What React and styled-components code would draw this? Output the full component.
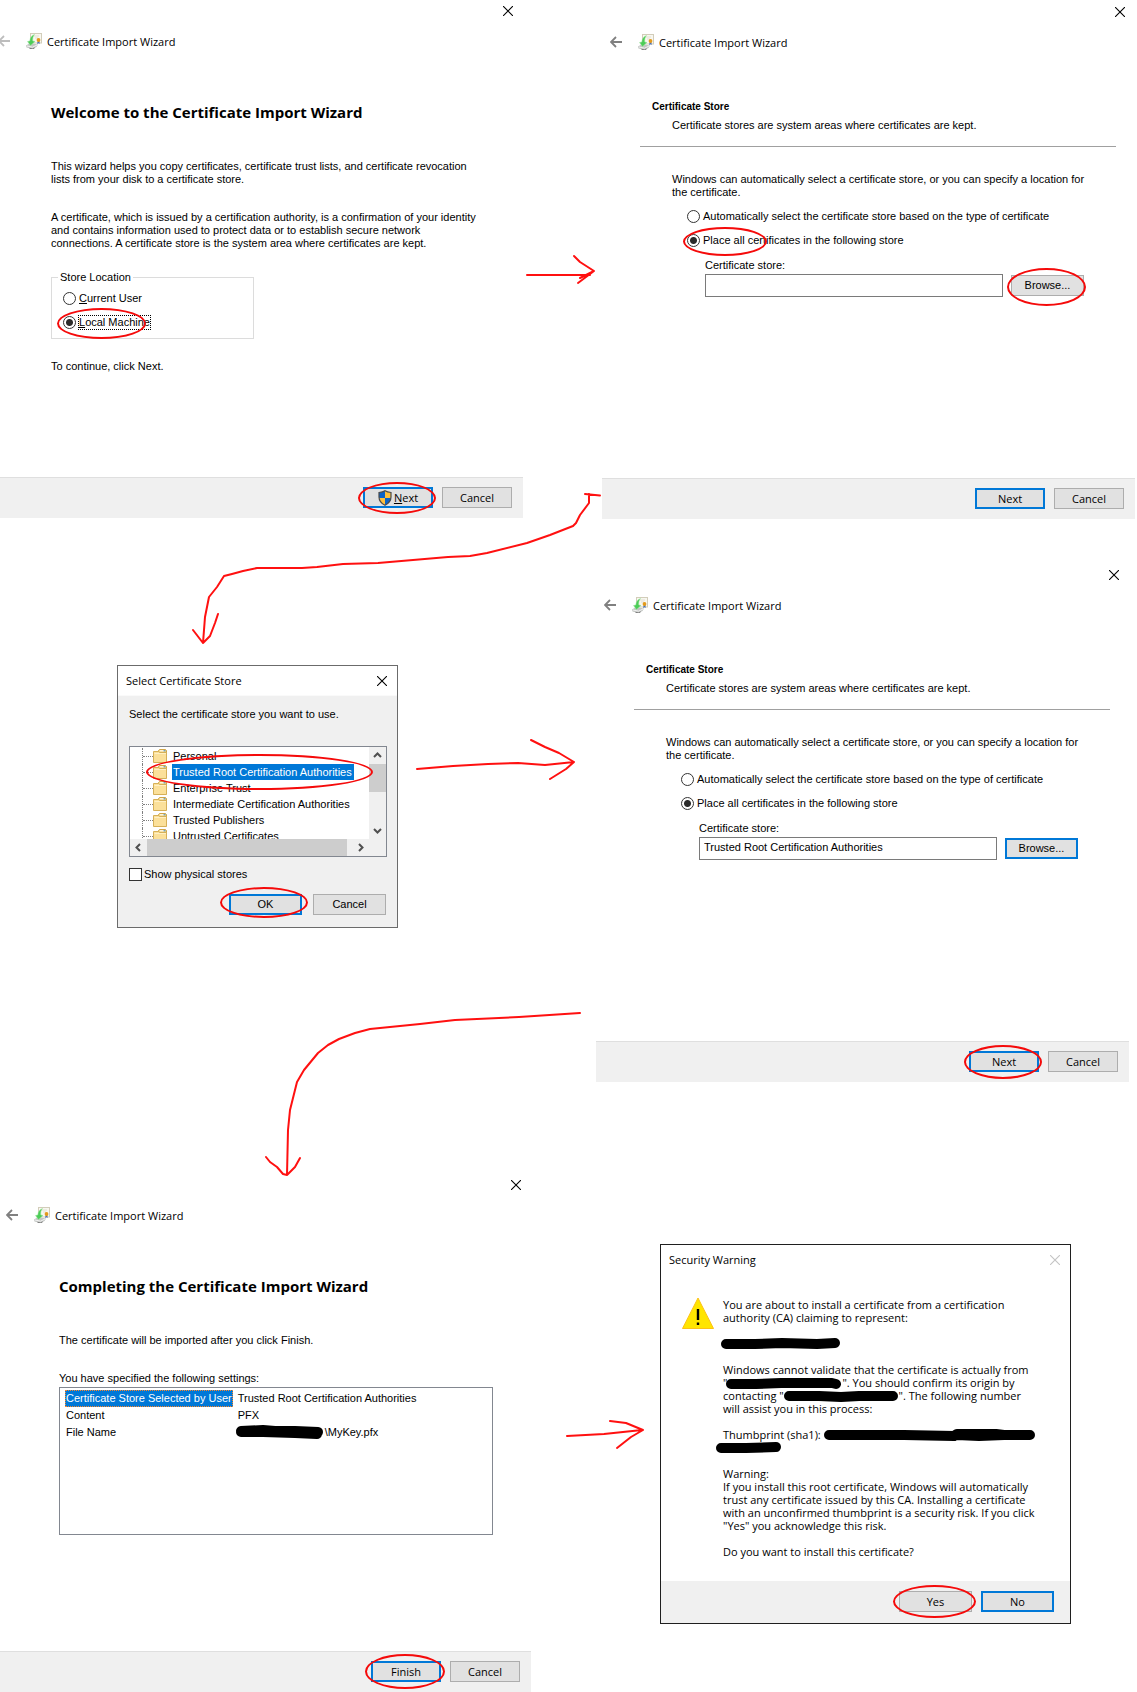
import React from "react";
import styled, { createGlobalStyle, css } from "styled-components";

const uiFont = `"Open Sans", "Noto Sans", sans-serif`;
const dialogFont = `"Liberation Sans", Arial, sans-serif`;
const accent = "#0078d7";

const GlobalStyle = createGlobalStyle`
  *, *::before, *::after { box-sizing: border-box; }
  body {
    margin: 0;
    background: #fff;
    color: #000;
    font: 11px/13px ${dialogFont};
    overflow-x: hidden;
  }
  h1, h2, p, ul { margin: 0; padding: 0; }
`;

/* ---------- page ---------- */

const Board = styled.main`
  position: relative;
  display: flex;
  gap: 65px;
`;

const Column = styled.div`
  flex: none;
  width: ${(p) => p.$width};
  display: flex;
  flex-direction: column;
  align-items: flex-start;
`;

const Step = styled.div`
  width: 100%;
  margin-top: ${(p) => p.$gap || 0}px;
  padding-left: ${(p) => p.$indent || 0}px;
`;

const Connectors = styled.svg`
  position: absolute;
  top: 0;
  left: 0;
  pointer-events: none;
  fill: none;
  stroke: #ff1010;
  stroke-width: 2;
  stroke-linecap: round;
  stroke-linejoin: round;
`;

/* ---------- shared controls ---------- */

const Marked = styled.span`
  position: relative;
  display: inline-flex;
`;

const Ring = styled.span`
  position: absolute;
  left: ${(p) => p.$x}px;
  top: ${(p) => p.$y}px;
  width: ${(p) => p.$w}px;
  height: ${(p) => p.$h}px;
  border: 2px solid #f50a0a;
  border-radius: 50%;
  pointer-events: none;
  z-index: 1;
`;

const Button = styled.button`
  display: inline-flex;
  align-items: center;
  justify-content: center;
  gap: ${(p) => p.$gap || 0}px;
  width: ${(p) => (p.$wide ? 73 : 70)}px;
  height: 21px;
  padding: 0;
  border: ${(p) => (p.$primary ? `2px solid ${accent}` : "1px solid #adadad")};
  background: #e1e1e1;
  color: #000;
  font: 11px/13px ${(p) => (p.$dialog ? dialogFont : uiFont)};
`;

const IconButton = styled.button`
  display: flex;
  align-items: center;
  justify-content: center;
  width: ${(p) => p.$width || 30}px;
  height: ${(p) => p.$height || 22}px;
  padding: 0;
  border: 0;
  background: none;
  color: ${(p) => p.$color || "#000"};
`;

const Choice = styled.label`
  position: relative;
  display: flex;
  align-items: center;
  gap: ${(p) => p.$gap || 3}px;
  width: max-content;
  height: 15px;
`;

const ChoiceText = styled.span`
  ${(p) => p.$focused && css`outline: 1px dotted #000;`}
`;

const Radio = styled.input.attrs({ type: "radio" })`
  appearance: none;
  width: 13px;
  height: 13px;
  margin: 0;
  border: 1px solid #333;
  border-radius: 50%;
  background: #fff;
  &:checked {
    background: radial-gradient(circle, #2b2b2b 3px, #fff 4px);
  }
`;

const Checkbox = styled.input.attrs({ type: "checkbox" })`
  appearance: none;
  width: 13px;
  height: 13px;
  margin: 0;
  border: 1px solid #333;
  background: #fff;
`;

/* ---------- wizard window ---------- */

const Window = styled.section`
  display: flex;
  flex-direction: column;
  width: 533px;
  min-height: 518px;
  margin-left: ${(p) => -(p.$cropped || 0)}px;
  background: #fff;
`;

const CaptionRow = styled.div`
  display: flex;
  justify-content: flex-end;
`;

const NavRow = styled.header`
  display: flex;
  align-items: center;
  height: 38px;
  padding-left: 8px;
  gap: 5px;
  font: 11px/15px ${uiFont};
`;

const BackSlot = styled.div`
  width: 23px;
`;

const WizardFooter = styled.footer`
  display: flex;
  justify-content: flex-end;
  gap: 9px;
  height: 41px;
  padding: 9px 11px 0;
  border-top: 1px solid #dfdfdf;
  background: #f0f0f0;
`;

const IntroBody = styled.div`
  flex: 1;
  padding: 42px 38px 20px 61px;
`;

const Heading = styled.h1`
  font: bold 15px/20px ${uiFont};
  margin-bottom: 38px;
`;

const Paragraph = styled.p`
  margin-bottom: ${(p) => p.$after || 0}px;
  white-space: nowrap;
`;

const Group = styled.fieldset`
  width: 203px;
  margin: 0 0 21px;
  padding: 7px 6px 8px;
  border: 1px solid #dcdcdc;
  legend { padding: 0 2px; }
`;

const ChoiceList = styled.div`
  display: flex;
  flex-direction: column;
  gap: 9px;
  padding-left: ${(p) => p.$inset}px;
`;

const StoreBody = styled.div`
  flex: 1;
  padding: 39px 19px 20px 38px;
`;

const StoreHeader = styled.div`
  padding: 0 0 14px 12px;
  border-bottom: 1px solid #a0a0a0;
  h2 {
    font: bold 10px/13px ${dialogFont};
    margin-bottom: 6px;
  }
  p { padding-left: 20px; }
`;

const StoreForm = styled.div`
  padding: 26px 0 0 32px;
`;

const StoreField = styled.div`
  margin-top: 11px;
  padding-left: 33px;
`;

const StoreRow = styled.div`
  display: flex;
  align-items: center;
  gap: 8px;
  margin-top: 2px;
`;

const TextBox = styled.input.attrs({ type: "text" })`
  width: 298px;
  height: 23px;
  padding: 0 4px 4px;
  border: 1px solid #7a7a7a;
  background: #fff;
  color: #000;
  font: 11px/13px ${dialogFont};
`;

const SettingsBox = styled.div`
  height: 148px;
  margin-top: 2px;
  padding: 2px 5px;
  border: 1px solid #828790;
`;

const SettingsTable = styled.table`
  border-collapse: collapse;
  th, td {
    height: 17px;
    padding: 0 1px;
    font-weight: normal;
    text-align: left;
    white-space: nowrap;
  }
  th { width: 166px; }
  td { padding-left: 5px; }
`;

const SelectedCell = styled.th`
  background: ${accent};
  color: #fff;
  outline: 1px dotted #ff8728;
  outline-offset: -1px;
`;

/* ---------- framed dialogs ---------- */

const Dialog = styled.section`
  width: ${(p) => p.$width}px;
  border: 1px solid ${(p) => p.$edge};
  background: #fff;
`;

const DialogTitle = styled.header`
  display: flex;
  align-items: center;
  justify-content: space-between;
  height: 29px;
  padding-left: 8px;
  font: 11px/15px ${uiFont};
`;

const PickerBody = styled.div`
  padding: 12px 10px 12px 11px;
  border-top: 1px solid #fafafa;
  background: #f0f0f0;
`;

const TreeFrame = styled.div`
  position: relative;
  display: grid;
  grid-template: 92px 17px / 1fr 17px;
  margin: 25px 0 10px;
  border: 1px solid #828790;
  background: #f0f0f0;
`;

const Tree = styled.ul`
  overflow: hidden;
  padding-top: 1px;
  background: #fff;
  list-style: none;
`;

const TreeItem = styled.li`
  display: flex;
  align-items: center;
  height: 16px;
  padding-left: 12px;
  line-height: 16px;
`;

const Branch = styled.span`
  display: flex;
  align-items: center;
  width: 11px;
  height: 16px;
  border-left: 1px dotted #808080;
  &::after {
    content: "";
    flex: 1;
    border-top: 1px dotted #808080;
  }
`;

const TreeLabel = styled.span`
  margin-left: 4px;
  padding: 0 2px 0 1px;
  ${(p) => p.$selected && css`background: ${accent}; color: #fff;`}
`;

const ScrollBar = styled.div`
  display: flex;
  flex-direction: ${(p) => (p.$vertical ? "column" : "row")};
  background: #f0f0f0;
  color: #505050;
`;

const ScrollButton = styled(IconButton).attrs({ $width: 17, $height: 17, $color: "#505050" })``;

const ScrollTrack = styled.div`
  display: flex;
  flex-direction: ${(p) => (p.$vertical ? "column" : "row")};
  flex: 1;
`;

const ScrollThumb = styled.div`
  flex: ${(p) => p.$size};
  background: #cdcdcd;
`;

const PickerActions = styled.div`
  display: flex;
  justify-content: flex-end;
  gap: 11px;
  margin-top: 12px;
  padding-right: 1px;
`;

const WarningBody = styled.div`
  display: flex;
  align-items: flex-start;
  gap: 9px;
  padding: 23px 20px 23px 21px;
`;

const WarningText = styled.div`
  padding-top: 1px;
  font: 11px/13px ${uiFont};
  white-space: nowrap;
  p + p { margin-top: 13px; }
`;

const WarningActions = styled.footer`
  display: flex;
  justify-content: flex-end;
  gap: 9px;
  padding: 10px 16px 11px;
  background: #f0f0f0;
`;

const Scribble = styled.svg`
  height: 12px;
  margin-left: ${(p) => -(p.$pull || 0)}px;
  vertical-align: -2px;
  overflow: visible;
  fill: none;
  stroke: #000;
  stroke-width: 10;
  stroke-linecap: round;
  stroke-linejoin: round;
`;

/* ---------- drawings ---------- */

const CloseIcon = () => (
  <svg width="10" height="10" viewBox="0 0 10 10" stroke="currentColor" strokeWidth="1.1">
    <path d="M0 0L10 10M10 0L0 10" />
  </svg>
);

const BackIcon = () => (
  <svg width="12" height="12" viewBox="0 0 12 12" fill="none" stroke="currentColor" strokeWidth="1.8">
    <path d="M12 6H1M6 1L1 6L6 11" />
  </svg>
);

const WizardIcon = () => (
  <svg width="16" height="16" viewBox="0 0 16 16">
    <rect x="4.500" y=".5" width="11" height="9.500" fill="#f8f7f0" stroke="#d2cdba" />
    <path d="M8 3h5M9 5h3" stroke="#e2dfd2" />
    <path d="M0 12.500L4 10l8 1.500-1.500 2.500L6.500 16 .5 14.500z" fill="#c3c6c3" />
    <path d="M1 13l5.500 1.200L11 12" stroke="#f2f2f2" fill="none" />
    <path d="M3.500 15.400l3.200.4 2-1" stroke="#7d7d7d" fill="none" />
    <path d="M8.500 1.500C5.500 2.500 4 5 3.800 8L1.500 8.500 4.500 12.500 9 8.500 6.800 8C6.500 5.500 7 3.500 8.500 1.500z" fill="#4ccc58" stroke="#9be59a" strokeWidth=".5" />
    <path d="M11.800 8l-.8 3 1.500-.8 1.200.8-.3-3z" fill="#4a6fb5" />
    <circle cx="12.500" cy="7" r="1.900" fill="#e39a1c" />
  </svg>
);

const ShieldIcon = () => (
  <svg width="14" height="16" viewBox="0 0 14 16">
    <clipPath id="shield"><path d="M7 .8C5.300 2 3.300 2.400 1 2.500V7c0 4 2.500 6.500 6 8.300C10.500 13.500 13 11 13 7V2.500C10.700 2.400 8.700 2 7 .8z" /></clipPath>
    <g clipPath="url(#shield)">
      <path d="M0 0h7v8H0zM7 8h7v8H7z" fill="#0a63c8" />
      <path d="M7 0h7v8H7zM0 8h7v8H0z" fill="#ffc03a" />
    </g>
    <path d="M7 .8C5.300 2 3.300 2.400 1 2.500V7c0 4 2.500 6.500 6 8.300C10.500 13.500 13 11 13 7V2.500C10.700 2.400 8.700 2 7 .8z" fill="none" stroke="#4a4a4a" strokeWidth="1.200" />
  </svg>
);

const FolderIcon = () => (
  <svg width="15" height="15" viewBox="0 0 15 15">
    <path d="M5.500 3V1.500l1-1h6l1 1V13h-8z" fill="#f3d583" stroke="#cfa549" />
    <path d="M7 1.800h4" stroke="#fff" />
    <path d="M10.500 1.800h2" stroke="#3f8fd0" />
    <path d="M.5 2.500h5l1 1h7v10H.5z" fill="#fbe09a" stroke="#d6b058" />
    <path d="M1.500 4.500h11.500" stroke="#fff0c4" />
  </svg>
);

const WarningIcon = () => (
  <svg width="32" height="32" viewBox="0 0 32 32" role="img" aria-label="Warning">
    <path d="M16 1L31.500 31.500H.5z" fill="#ffe500" stroke="#fdc116" strokeLinejoin="round" />
    <path d="M16 12v11M16 25.500v2.500" stroke="#000" strokeWidth="2.400" />
  </svg>
);

const chevrons = {
  up: "M1 6L4.500 2.500L8 6",
  down: "M1 3L4.500 6.500L8 3",
  left: "M6 1L2.500 4.500L6 8",
  right: "M3 1L6.500 4.500L3 8",
};

const Chevron = ({ to }) => (
  <svg width="9" height="9" viewBox="0 0 9 9" fill="none" stroke="currentColor" strokeWidth="2">
    <path d={chevrons[to]} />
  </svg>
);

const Redacted = ({ width, d, pull }) => (
  <Scribble width={width} $pull={pull} role="img" aria-label="redacted">
    <path d={d} />
  </Scribble>
);

/* ---------- pieces ---------- */

function WizardWindow({ cropped, backDisabled, children, footer }) {
  return (
    <Window $cropped={cropped}>
      <CaptionRow>
        <IconButton aria-label="Close"><CloseIcon /></IconButton>
      </CaptionRow>
      <NavRow>
        <BackSlot>
          <IconButton $width={12} $color={backDisabled ? "#bdbdbd" : "#808080"} aria-label="Back" disabled={backDisabled}>
            <BackIcon />
          </IconButton>
        </BackSlot>
        <WizardIcon />
        <span>Certificate Import Wizard</span>
      </NavRow>
      {children}
      <WizardFooter>{footer}</WizardFooter>
    </Window>
  );
}

function StoreStep({ id, value, choiceRing, browseRing, nextRing }) {
  return (
    <WizardWindow
      footer={
        <>
          <Marked>
            <Button $primary>Next</Button>
            {nextRing}
          </Marked>
          <Button>Cancel</Button>
        </>
      }
    >
      <StoreBody>
        <StoreHeader>
          <h2>Certificate Store</h2>
          <p>Certificate stores are system areas where certificates are kept.</p>
        </StoreHeader>
        <StoreForm>
          <Paragraph $after={10}>
            Windows can automatically select a certificate store, or you can specify a location for
            <br />
            the certificate.
          </Paragraph>
          <ChoiceList $inset={15}>
            <Choice>
              <Radio name={id} />
              <ChoiceText>Automatically select the certificate store based on the type of certificate</ChoiceText>
            </Choice>
            <Choice>
              <Radio name={id} defaultChecked />
              <ChoiceText>Place all certificates in the following store</ChoiceText>
              {choiceRing}
            </Choice>
          </ChoiceList>
          <StoreField>
            <label htmlFor={`${id}-store`}>Certificate store:</label>
            <StoreRow>
              <TextBox id={`${id}-store`} defaultValue={value} />
              <Marked>
                <Button $wide $dialog $primary={!browseRing}>Browse...</Button>
                {browseRing}
              </Marked>
            </StoreRow>
          </StoreField>
        </StoreForm>
      </StoreBody>
    </WizardWindow>
  );
}

const stores = [
  "Personal",
  "Trusted Root Certification Authorities",
  "Enterprise Trust",
  "Intermediate Certification Authorities",
  "Trusted Publishers",
  "Untrusted Certificates",
];

function StorePicker() {
  return (
    <Dialog $width={281} $edge="#6b6b6b">
      <DialogTitle>
        <span>Select Certificate Store</span>
        <IconButton aria-label="Close"><CloseIcon /></IconButton>
      </DialogTitle>
      <PickerBody>
        <p>Select the certificate store you want to use.</p>
        <TreeFrame>
          <Tree>
            {stores.map((name, i) => (
              <TreeItem key={name}>
                <Branch />
                <FolderIcon />
                <TreeLabel $selected={i === 1}>{name}</TreeLabel>
              </TreeItem>
            ))}
          </Tree>
          <ScrollBar $vertical>
            <ScrollButton aria-label="Scroll up"><Chevron to="up" /></ScrollButton>
            <ScrollTrack $vertical>
              <ScrollThumb $size="0 0 28px" />
            </ScrollTrack>
            <ScrollButton aria-label="Scroll down"><Chevron to="down" /></ScrollButton>
          </ScrollBar>
          <ScrollBar>
            <ScrollButton aria-label="Scroll left"><Chevron to="left" /></ScrollButton>
            <ScrollTrack>
              <ScrollThumb $size="0 0 200px" />
            </ScrollTrack>
            <ScrollButton aria-label="Scroll right"><Chevron to="right" /></ScrollButton>
          </ScrollBar>
          <Ring $x={16} $y={7} $w={227} $h={36} />
        </TreeFrame>
        <Choice $gap={2}>
          <Checkbox />
          <ChoiceText>Show physical stores</ChoiceText>
        </Choice>
        <PickerActions>
          <Marked>
            <Button $wide $dialog $primary>OK</Button>
            <Ring $x={-9} $y={-7} $w={88} $h={31} />
          </Marked>
          <Button $wide $dialog>Cancel</Button>
        </PickerActions>
      </PickerBody>
    </Dialog>
  );
}

function SecurityWarning() {
  return (
    <Dialog $width={411} $edge="#1f1f1f">
      <DialogTitle>
        <span>Security Warning</span>
        <IconButton $color="#c4c4c4" aria-label="Close" disabled><CloseIcon /></IconButton>
      </DialogTitle>
      <WarningBody>
        <WarningIcon />
        <WarningText>
          <p>
            You are about to install a certificate from a certification
            <br />
            authority (CA) claiming to represent:
          </p>
          <p><Redacted width={120} pull={3} d="M6 6L35 6L62 5L97 6L115 5" /></p>
          <p>
            Windows cannot validate that the certificate is actually from
            <br />
            "<Redacted width={116} pull={1} d="M5 7L30 7L55 6L106 6L110 7" />". You should confirm its origin by
            <br />
            contacting "<Redacted width={115} d="M5 6L35 6L57 7L75 6L109 6" />". The following number
            <br />
            will assist you in this process:
          </p>
          <p>
            Thumbprint (sha1): <Redacted width={211} d="M5 6H80L130 7L133 5H172L180 6L155 7L133 6M172 6H206" />
            <br />
            <Redacted width={64} pull={7} d="M5 6L30 6L60 5" />
          </p>
          <p>
            Warning:
            <br />
            If you install this root certificate, Windows will automatically
            <br />
            trust any certificate issued by this CA. Installing a certificate
            <br />
            with an unconfirmed thumbprint is a security risk. If you click
            <br />
            "Yes" you acknowledge this risk.
          </p>
          <p>Do you want to install this certificate?</p>
        </WarningText>
      </WarningBody>
      <WarningActions>
        <Marked>
          <Button $wide>Yes</Button>
          <Ring $x={-6} $y={-6} $w={83} $h={33} />
        </Marked>
        <Button $wide $primary>No</Button>
      </WarningActions>
    </Dialog>
  );
}

export default function App() {
  return (
    <>
      <GlobalStyle />
      <Board>
        <Column $width="531px">
          <Step>
            <WizardWindow
              cropped={10}
              backDisabled
              footer={
                <>
                  <Marked>
                    <Button $primary $gap={2}>
                      <ShieldIcon />
                      <span><u>N</u>ext</span>
                    </Button>
                    <Ring $x={-5} $y={-5} $w={78} $h={32} />
                  </Marked>
                  <Button>Cancel</Button>
                </>
              }
            >
              <IntroBody>
                <Heading>Welcome to the Certificate Import Wizard</Heading>
                <Paragraph $after={25}>
                  This wizard helps you copy certificates, certificate trust lists, and certificate revocation
                  <br />
                  lists from your disk to a certificate store.
                </Paragraph>
                <Paragraph $after={21}>
                  A certificate, which is issued by a certification authority, is a confirmation of your identity
                  <br />
                  and contains information used to protect data or to establish secure network
                  <br />
                  connections. A certificate store is the system area where certificates are kept.
                </Paragraph>
                <Group>
                  <legend>Store Location</legend>
                  <ChoiceList $inset={5}>
                    <Choice>
                      <Radio name="location" />
                      <ChoiceText><u>C</u>urrent User</ChoiceText>
                    </Choice>
                    <Choice>
                      <Radio name="location" defaultChecked />
                      <ChoiceText $focused><u>L</u>ocal Machine</ChoiceText>
                      <Ring $x={-6} $y={-7} $w={89} $h={31} />
                    </Choice>
                  </ChoiceList>
                </Group>
                <Paragraph>To continue, click Next.</Paragraph>
              </IntroBody>
            </WizardWindow>
          </Step>
          <Step $gap={147} $indent={117}>
            <StorePicker />
          </Step>
          <Step $gap={246}>
            <WizardWindow
              cropped={2}
              footer={
                <>
                  <Marked>
                    <Button $primary>Finish</Button>
                    <Ring $x={-6} $y={-7} $w={80} $h={35} />
                  </Marked>
                  <Button>Cancel</Button>
                </>
              }
            >
              <IntroBody>
                <Heading>Completing the Certificate Import Wizard</Heading>
                <Paragraph $after={25}>The certificate will be imported after you click Finish.</Paragraph>
                <Paragraph>You have specified the following settings:</Paragraph>
                <SettingsBox>
                  <SettingsTable>
                    <tbody>
                      <tr>
                        <SelectedCell scope="row">Certificate Store Selected by User</SelectedCell>
                        <td>Trusted Root Certification Authorities</td>
                      </tr>
                      <tr>
                        <th scope="row">Content</th>
                        <td>PFX</td>
                      </tr>
                      <tr>
                        <th scope="row">File Name</th>
                        <td>
                          <Redacted width={90} pull={3} d="M6 5L28 4L40 5H60L83 6M6 6L28 6L60 7L82 8" />
                          \MyKey.pfx
                        </td>
                      </tr>
                    </tbody>
                  </SettingsTable>
                </SettingsBox>
              </IntroBody>
            </WizardWindow>
          </Step>
        </Column>

        <Column $width="541px">
          <Step $gap={1} $indent={6}>
            <StoreStep
              id="choose"
              value=""
              choiceRing={<Ring $x={-4} $y={-6} $w={84} $h={29} />}
              browseRing={<Ring $x={-4} $y={-7} $w={79} $h={38} />}
            />
          </Step>
          <Step $gap={45}>
            <StoreStep
              id="chosen"
              value="Trusted Root Certification Authorities"
              nextRing={<Ring $x={-5} $y={-6} $w={78} $h={34} />}
            />
          </Step>
          <Step $gap={162} $indent={64}>
            <SecurityWarning />
          </Step>
        </Column>

        <Connectors width="1137" height="1692" viewBox="0 0 1137 1692" aria-hidden="true">
          <path d="M527 275H590M574 256L580 262L594 271L578 283M592 272L580 278" />
          <path d="M600 495.500L585 494M589 494V503L580 515L576 523L573 526L550 535L527 543L487 553L470 556L448 557L378 563L343 564L317 567L302 568H257L243 571L232 574L224 576L217 587L209 597L205 617L203 643M193 630L203 643L210 636L215 623L218 614" />
          <path d="M417 769L453 766L488 764L518 763L545 765L574 762M531 740L545 747L559 753L574 762L566 769L550 779" />
          <path d="M580 1013L519 1017L455 1020L420 1024L370 1029L355 1033L339 1039L328 1045L318 1053L304 1070L297 1082L290 1110L288 1130L287 1175M266 1157L270 1162L277 1167L283 1174L287 1175L295 1167L300 1158" />
          <path d="M567 1436L604 1434L642 1430M610 1421L626 1423L643 1430L631 1437L617 1448" />
        </Connectors>
      </Board>
    </>
  );
}
